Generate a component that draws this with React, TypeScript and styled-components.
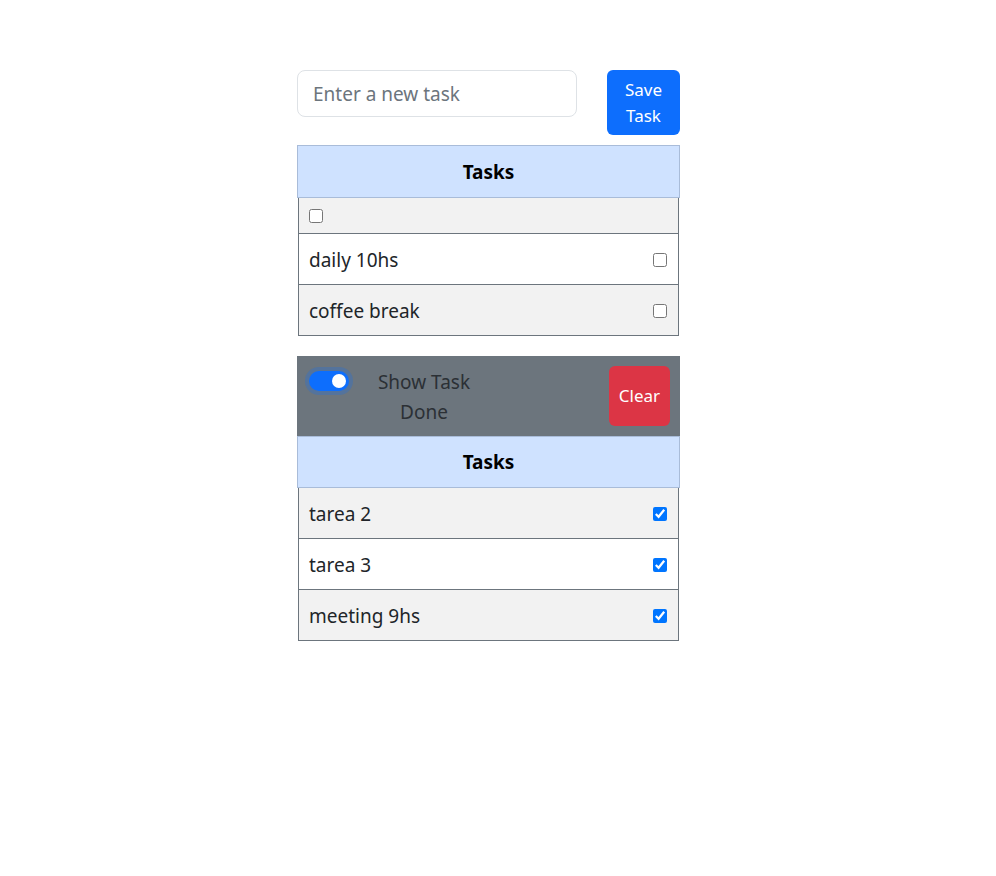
import React from "react";
import styled, { createGlobalStyle } from "styled-components";

const GlobalStyle = createGlobalStyle`
  html, body { margin: 0; padding: 0; background: #ffffff; }
  body {
    font-family: "Noto Sans", "Open Sans", sans-serif;
    color: #212529;
    -webkit-font-smoothing: antialiased;
  }
  * { box-sizing: border-box; }
`;

const Page = styled.div`
  padding: 70px 0 0 297px;
`;

const Column = styled.div`
  width: 383px;
  display: flex;
  flex-direction: column;
`;

const InputRow = styled.div`
  display: flex;
  align-items: flex-start;
  gap: 30px;
  margin-bottom: 10px;
`;

const TaskInput = styled.input`
  width: 280px;
  height: 47px;
  padding: 1px 15px 0;
  border: 1px solid #dee2e6;
  border-radius: 8px;
  font-family: inherit;
  font-size: 19px;
  color: #212529;
  outline: none;
  &::placeholder { color: #6c757d; }
`;

const Button = styled.button<{ $variant: "primary" | "danger"; $w: number; $h: number }>`
  width: ${(p) => p.$w}px;
  height: ${(p) => p.$h}px;
  padding: 0 4px;
  border: none;
  border-radius: 6px;
  background: ${(p) => (p.$variant === "primary" ? "#0d6efd" : "#dc3545")};
  color: #ffffff;
  font-family: inherit;
  font-size: 17px;
  line-height: 26px;
  text-align: center;
  flex-shrink: 0;
`;

const Table = styled.div<{ $gapBelow?: number }>`
  display: flex;
  flex-direction: column;
  margin-bottom: ${(p) => p.$gapBelow ?? 0}px;
`;

const Header = styled.div<{ $h: number }>`
  height: ${(p) => p.$h}px;
  background: #cfe2ff;
  border: 1px solid #a9bcd9;
  display: flex;
  align-items: center;
  justify-content: center;
  font-weight: 700;
  font-size: 19px;
  color: #000000;
`;

const Body = styled.div`
  margin: 0 1px;
  border-left: 1px solid #6c757d;
  border-right: 1px solid #6c757d;
`;

const Row = styled.div<{ $striped: boolean; $h: number }>`
  height: ${(p) => p.$h}px;
  background: ${(p) => (p.$striped ? "#f2f2f2" : "#ffffff")};
  border-bottom: 1px solid #6c757d;
  display: flex;
  align-items: center;
  justify-content: space-between;
  padding: 1px 11px 0 10px;
  font-size: 19px;
  color: #212529;
`;

const Check = styled.input`
  width: 14px;
  height: 14px;
  margin: 0;
`;

const Panel = styled.div`
  height: 80px;
  background: #6c757d;
  padding: 10px;
  display: flex;
  align-items: flex-start;
`;

const Switch = styled.span`
  width: 40px;
  height: 20px;
  margin: 5px 0 0 2px;
  border-radius: 10px;
  background: #0d6efd;
  box-shadow: 0 0 0 4px rgba(13, 110, 253, 0.25);
  display: flex;
  justify-content: flex-end;
  align-items: center;
  padding: 0 3px;
  flex-shrink: 0;
`;

const Knob = styled.span`
  width: 14px;
  height: 14px;
  border-radius: 50%;
  background: #ffffff;
`;

const SwitchLabel = styled.div`
  width: 124px;
  margin: 1px 0 0 13px;
  text-align: center;
  font-size: 19px;
  line-height: 30px;
  color: #2b3035;
`;

const Spacer = styled.div`
  flex: 1;
`;

const pending = ["daily 10hs", "coffee break"];
const done = ["tarea 2", "tarea 3", "meeting 9hs"];

export default function App() {
  return (
    <>
      <GlobalStyle />
      <Page>
        <Column>
          <InputRow>
            <TaskInput placeholder="Enter a new task" />
            <Button $variant="primary" $w={73} $h={65}>
              Save
              <br />
              Task
            </Button>
          </InputRow>

          <Table $gapBelow={20}>
            <Header $h={53}>Tasks</Header>
            <Body>
              <Row $striped $h={36}>
                <Check type="checkbox" readOnly />
              </Row>
              {pending.map((t, i) => (
                <Row key={t} $striped={i % 2 === 1} $h={51}>
                  <span>{t}</span>
                  <Check type="checkbox" readOnly />
                </Row>
              ))}
            </Body>
          </Table>

          <Panel>
            <Switch>
              <Knob />
            </Switch>
            <SwitchLabel>
              Show Task
              <br />
              Done
            </SwitchLabel>
            <Spacer />
            <Button $variant="danger" $w={61} $h={60}>
              Clear
            </Button>
          </Panel>

          <Table>
            <Header $h={52}>Tasks</Header>
            <Body>
              {done.map((t, i) => (
                <Row key={t} $striped={i % 2 === 0} $h={51}>
                  <span>{t}</span>
                  <Check type="checkbox" checked readOnly />
                </Row>
              ))}
            </Body>
          </Table>
        </Column>
      </Page>
    </>
  );
}
